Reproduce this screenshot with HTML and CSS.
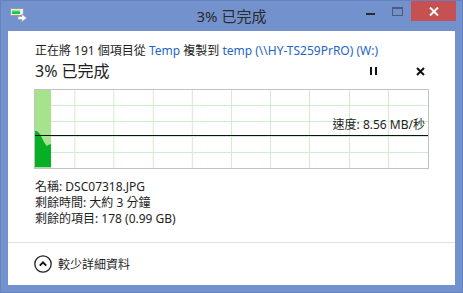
FILE: index.html
```html
<!doctype html>
<html lang="zh-Hant">
<head>
  <meta charset="utf-8">
  <title>3% 已完成</title>
  <link rel="stylesheet" href="styles.css">
</head>

<body>
  <div class="window">
    <!-- Title bar -->
    <div class="titlebar">
      <div class="app-icon">
        <svg width="17" height="14" viewBox="0 0 17 14">
          <rect x="0.5" y="0.5" width="13" height="7" rx="1" fill="#e9eef3" stroke="#8f9aa6"/>
          <rect x="2" y="2" width="8" height="4" fill="#1fc43a"/>
          <rect x="2" y="2" width="8" height="1.5" fill="#8be88f"/>
          <path d="M8 8.5 H12 V6 L16.5 10 L12 14 V11.5 H8 Z" fill="#fafafa" stroke="#9aa4ae" stroke-width="0.8"/>
        </svg>
      </div>
      <div class="title">3% 已完成</div>
      <div class="caption-buttons">
        <div class="cap-btn"><span class="min-glyph"></span></div>
        <div class="cap-btn"><span class="max-glyph"></span></div>
        <div class="cap-btn close-btn">
          <svg width="10" height="9" viewBox="0 0 10 9">
            <path d="M1 0.5 L9 8.5 M9 0.5 L1 8.5" stroke="#fff" stroke-width="2"/>
          </svg>
        </div>
      </div>
    </div>

    <!-- Client area -->
    <div class="client">
      <div class="content">
        <p class="summary">正在將 191 個項目從 <span class="link">Temp</span> 複製到 <span class="link">temp (\\HY-TS259PrRO) (W:)</span></p>

        <div class="status-row">
          <span class="percent">3% 已完成</span>
          <div class="controls">
            <svg class="pause" width="8" height="8" viewBox="0 0 8 8">
              <rect x="0" y="0" width="2" height="8" fill="#111"/>
              <rect x="5" y="0" width="2" height="8" fill="#111"/>
            </svg>
            <svg class="stop" width="9" height="9" viewBox="0 0 9 9">
              <path d="M1 1 L8 8 M8 1 L1 8" stroke="#111" stroke-width="2"/>
            </svg>
          </div>
        </div>

        <div class="graph">
          <svg width="393" height="78" viewBox="0 0 393 78">
            <g stroke="#cdeed0" stroke-width="1">
              <line x1="39.8" y1="0" x2="39.8" y2="78"/>
              <line x1="78.8" y1="0" x2="78.8" y2="78"/>
              <line x1="118.3" y1="0" x2="118.3" y2="78"/>
              <line x1="157.3" y1="0" x2="157.3" y2="78"/>
              <line x1="196.5" y1="0" x2="196.5" y2="78"/>
              <line x1="235.5" y1="0" x2="235.5" y2="78"/>
              <line x1="274.5" y1="0" x2="274.5" y2="78"/>
              <line x1="314.5" y1="0" x2="314.5" y2="78"/>
              <line x1="353.5" y1="0" x2="353.5" y2="78"/>
              <line x1="0" y1="15.5" x2="393" y2="15.5"/>
              <line x1="0" y1="31.5" x2="393" y2="31.5"/>
              <line x1="0" y1="46.5" x2="393" y2="46.5"/>
              <line x1="0" y1="62.5" x2="393" y2="62.5"/>
            </g>
            <rect x="0" y="0" width="16" height="78" fill="#a7e38c"/>
            <path d="M0 41 L2 41 L3 42 L5 44 L7 48 L9 52 L11 55 L12 56 L13 55 L16 54 L16 77 L0 77 Z" fill="#06b025"/>
            <line x1="0" y1="45.5" x2="393" y2="45.5" stroke="#111" stroke-width="1"/>
          </svg>
          <span class="speed">速度: 8.56 MB/秒</span>
        </div>

        <div class="details">
          <div>名稱: DSC07318.JPG</div>
          <div>剩餘時間: 大約 3 分鐘</div>
          <div>剩餘的項目: 178 (0.99 GB)</div>
        </div>
      </div>

      <!-- Footer -->
      <div class="footer">
        <svg class="chevron" width="18" height="18" viewBox="0 0 18 18">
          <circle cx="9" cy="9" r="8.2" fill="none" stroke="#222" stroke-width="1.3"/>
          <path d="M5.8 10.6 L9 7.4 L12.2 10.6" fill="none" stroke="#111" stroke-width="2"/>
        </svg>
        <span>較少詳細資料</span>
      </div>
    </div>
  </div>
</body>
</html>
```

FILE: styles.css
```css
* {
  box-sizing: border-box;
}

body {
  margin: 0;
  font-family: 'Noto Sans', 'Noto Sans CJK TC', sans-serif;
  font-size: 12px;
  color: #1e1e1e;
  background: #7392cd;
}

.window {
  width: 463px;
  height: 293px;
  border: 1px solid #6282c0;
  background: #7392cd;
  display: flex;
  flex-direction: column;
}

/* Title bar */
.titlebar {
  height: 30px;
  display: grid;
  grid-template-columns: 1fr auto 1fr;
  align-items: start;
}

.app-icon {
  padding: 7px 0 0 9px;
}

.app-icon svg {
  display: block;
}

.title {
  font-size: 15px;
  line-height: 20px;
  padding-top: 5px;
  color: #2a2a2a;
}

.caption-buttons {
  display: flex;
  justify-content: flex-end;
  padding-right: 6px;
}

.cap-btn {
  width: 27px;
  height: 20px;
  position: relative;
}

.min-glyph {
  position: absolute;
  left: 9px;
  top: 12px;
  width: 9px;
  height: 2px;
  background: #2a2a2a;
}

.max-glyph {
  position: absolute;
  left: 8px;
  top: 6px;
  width: 11px;
  height: 9px;
  border: 1px solid #4d5b78;
  border-top-width: 2px;
}

.close-btn {
  width: 45px;
  background: #c75050;
  display: flex;
  justify-content: center;
  align-items: center;
}

/* Client area */
.client {
  flex: 1;
  margin: 0 7px 7px 7px;
  background: #fff;
  display: flex;
  flex-direction: column;
}

.content {
  padding: 12px 26px 0 26px;
  flex: 1;
}

.summary {
  margin: 0;
  line-height: 16px;
  padding-left: 1px;
}

.link {
  color: #1f66c6;
}

.status-row {
  display: flex;
  justify-content: space-between;
  align-items: center;
  margin-top: 2px;
  height: 20px;
}

.percent {
  font-size: 16px;
  line-height: 20px;
  padding-left: 1px;
}

.controls {
  display: flex;
  align-items: center;
  gap: 38px;
  padding-right: 4px;
}

.controls svg {
  display: block;
}

.graph {
  position: relative;
  margin-top: 8px;
  width: 395px;
  height: 80px;
  border: 1px solid #c3c3c3;
}

.graph svg {
  display: block;
}

.speed {
  position: absolute;
  right: 3px;
  top: 27px;
  line-height: 16px;
  background: transparent;
}

.details {
  margin-top: 10px;
  line-height: 16px;
  padding-left: 1px;
}

.footer {
  height: 43px;
  border-top: 1px solid #dfdfdf;
  display: flex;
  align-items: center;
  gap: 6px;
  padding: 0 0 0 26px;
}

.chevron {
  display: block;
}
```
